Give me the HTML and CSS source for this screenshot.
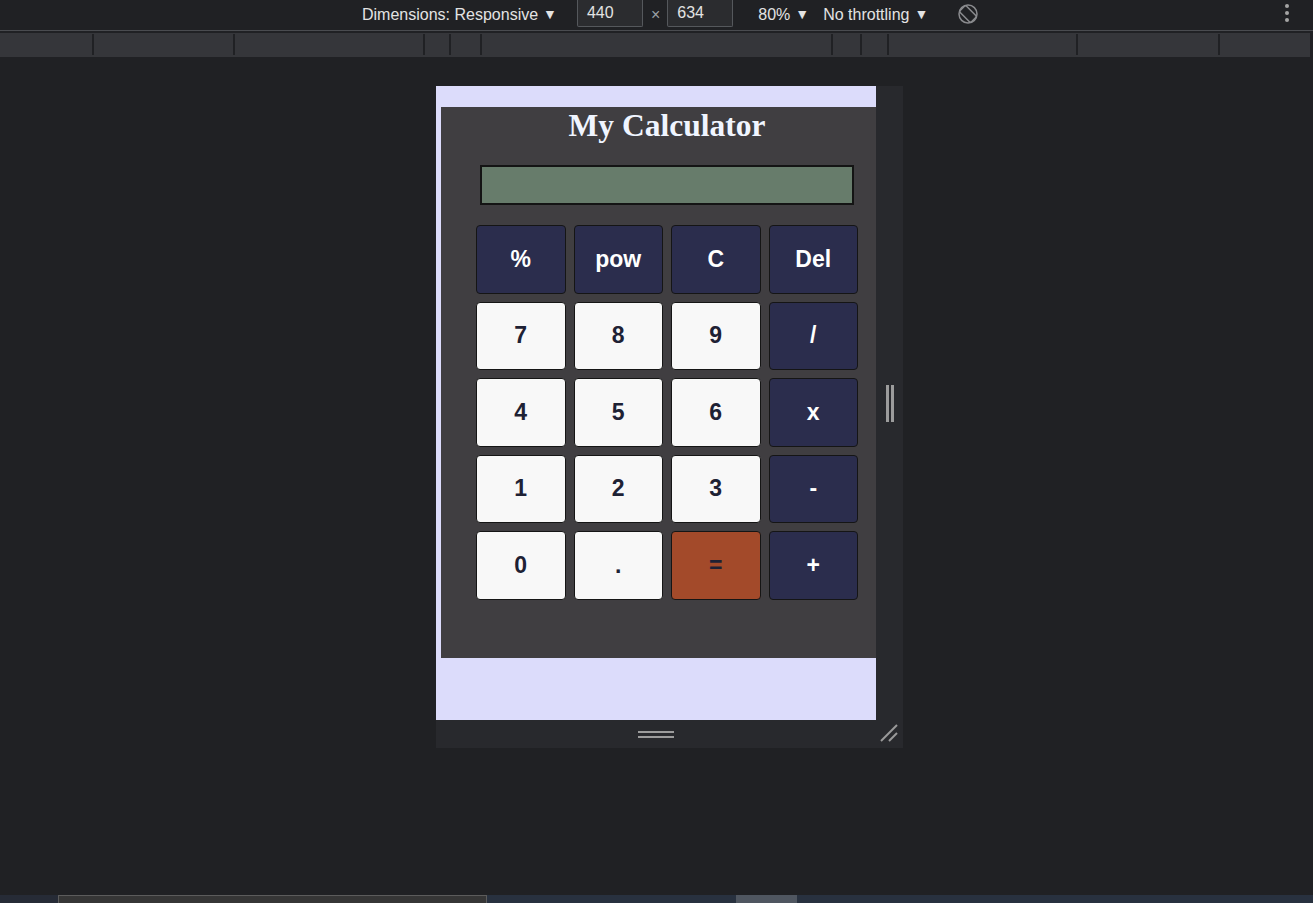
FILE: index.html
```html
<!DOCTYPE html>
<html lang="en">
<head>
<meta charset="utf-8">
<title>My Calculator</title>
<link rel="stylesheet" href="styles.css">
</head>
<body>
<div class="toolbar">
  <span class="tb-label">Dimensions: Responsive</span><span class="caret">▼</span>
  <span class="tb-input first">440</span>
  <span class="times">×</span>
  <span class="tb-input">634</span>
  <span class="tb-label zoomlbl">80%</span><span class="caret">▼</span>
  <span class="tb-label throttle">No throttling</span><span class="caret">▼</span>
  <svg class="rotate" width="22" height="22" viewBox="0 0 22 22">
    <circle cx="11" cy="11" r="9" fill="none" stroke="#8a8b8e" stroke-width="1.5"/>
    <rect x="6.5" y="3" width="9" height="16" rx="1.5" transform="rotate(-45 11 11)" fill="none" stroke="#8a8b8e" stroke-width="1.5"/>
  </svg>
  <span class="kebab"><i></i><i></i><i></i></span>
</div>
<div class="tb-line"></div>
<div class="ruler">
  <span class="seg" style="width:92px"></span><span class="tick"></span>
  <span class="seg" style="width:139px"></span><span class="tick"></span>
  <span class="seg" style="width:188px"></span><span class="tick"></span>
  <span class="seg" style="width:24px"></span><span class="tick"></span>
  <span class="seg" style="width:29px"></span><span class="tick"></span>
  <span class="seg" style="width:349px"></span><span class="tick"></span>
  <span class="seg" style="width:27px"></span><span class="tick"></span>
  <span class="seg" style="width:25px"></span><span class="tick"></span>
  <span class="seg" style="width:187px"></span><span class="tick"></span>
  <span class="seg" style="width:140px"></span><span class="tick"></span>
  <span class="seg" style="width:90px"></span>
</div>
<div class="stage">
  <div class="device">
    <div class="screen">
      <div class="calc">
        <h1 class="title">My Calculator</h1>
        <div class="display"></div>
        <div class="keys">
          <button class="key op">%</button>
          <button class="key op">pow</button>
          <button class="key op">C</button>
          <button class="key op">Del</button>
          <button class="key num">7</button>
          <button class="key num">8</button>
          <button class="key num">9</button>
          <button class="key op">/</button>
          <button class="key num">4</button>
          <button class="key num">5</button>
          <button class="key num">6</button>
          <button class="key op">x</button>
          <button class="key num">1</button>
          <button class="key num">2</button>
          <button class="key num">3</button>
          <button class="key op">-</button>
          <button class="key num">0</button>
          <button class="key num">.</button>
          <button class="key eq">=</button>
          <button class="key op">+</button>
        </div>
      </div>
    </div>
    <div class="rside"><span class="vgrip"></span><span class="vgrip"></span></div>
    <div class="bside">
      <span class="hgrip"><i></i><i></i></span>
      <svg class="corner" width="18" height="18" viewBox="0 0 18 18">
        <line x1="1" y1="17" x2="17" y2="1" stroke="#9a9a9a" stroke-width="2"/>
        <line x1="9" y1="17" x2="17" y2="9" stroke="#9a9a9a" stroke-width="2"/>
      </svg>
    </div>
  </div>
</div>
<div class="strip">
  <span class="s1"></span><span class="s2"></span><span class="s3"></span><span class="s4"></span><span class="s5"></span>
</div>
</body>
</html>
```
FILE: styles.css
```css
* { box-sizing: border-box; }
html, body { margin: 0; padding: 0; }
body {
  width: 1313px;
  height: 903px;
  overflow: hidden;
  background: #202124;
  display: flex;
  flex-direction: column;
  font-family: "Liberation Sans", Arial, sans-serif;
}

/* toolbar */
.toolbar {
  height: 30px;
  flex: none;
  display: flex;
  align-items: center;
  color: #e3e3e3;
  font-size: 16px;
  padding-left: 362px;
}
.tb-label { white-space: nowrap; }
.caret {
  font-size: 14px;
  margin-left: 5px;
  margin-top: -3px;
  color: #e3e3e3;
}
.tb-input {
  width: 66px;
  height: 27px;
  align-self: flex-start;
  background: #2b2c2f;
  border: 1px solid #55585c;
  border-top: none;
  border-radius: 0 0 2px 2px;
  padding: 4px 0 0 9px;
  color: #e3e3e3;
}
.tb-input.first { margin-left: 20px; }
.times { color: #9aa0a6; margin: 0 7px 0 8px; font-size: 16px; }
.zoomlbl { margin-left: 25px; }
.throttle { margin-left: 14px; }
.rotate { margin-left: 29px; margin-bottom: 3px; }
.kebab {
  margin-left: auto;
  margin-right: 24px;
  display: flex;
  flex-direction: column;
  gap: 3px;
  margin-top: -4px;
}
.kebab i {
  display: block;
  width: 4px;
  height: 4px;
  border-radius: 50%;
  background: #a5a5a5;
}
.tb-line {
  height: 1px;
  background: #4a4c50;
  flex: none;
  margin-bottom: 2px;
}

/* ruler */
.ruler {
  height: 24px;
  flex: none;
  display: flex;
  width: 1310px;
  background: #35363a;
}
.seg { display: block; height: 100%; }
.tick {
  display: block;
  width: 2px;
  height: 21px;
  margin-top: 1px;
  background: #202124;
}

/* stage / device */
.stage {
  flex: 1;
  padding: 29px 0 0 436px;
}
.device {
  display: grid;
  grid-template-columns: 440px 27px;
  grid-template-rows: 634px 28px;
  width: 467px;
}
.screen {
  background: #dcdcfb;
  overflow: hidden;
  padding: 21px 0 0 5px;
}
.calc {
  width: 452px;
  height: 551px;
  background: #403e41;
}
.title {
  margin: 0;
  font-family: "Liberation Serif", "Times New Roman", serif;
  font-size: 31.5px;
  font-weight: bold;
  text-align: center;
  color: #f0f5ff;
  line-height: 38px;
}
.display {
  width: 374px;
  height: 40px;
  margin: 20px auto 0;
  background: #677c6b;
  border: 2px solid #141414;
}
.keys {
  width: 382px;
  margin: 20px auto 0;
  display: grid;
  grid-template-columns: repeat(4, 89.5px);
  grid-auto-rows: 68.5px;
  gap: 8px;
}
.key {
  font-family: "Liberation Sans", Arial, sans-serif;
  font-size: 23px;
  font-weight: bold;
  border: 1px solid #151515;
  border-radius: 4px;
  padding: 0;
  margin: 0;
}
.op { background: #2b2d4d; color: #ffffff; }
.num { background: #f8f8f8; color: #1e2134; }
.eq { background: #a34a2a; color: #1e2134; }

.rside {
  background: #28292d;
  display: flex;
  justify-content: center;
  align-items: center;
  gap: 2px;
}
.vgrip {
  display: block;
  width: 3px;
  height: 37px;
  background: #9c9c9c;
}
.bside {
  grid-column: 1 / 3;
  background: #28292d;
  display: flex;
  align-items: center;
  padding-left: 202px;
}
.hgrip {
  display: flex;
  flex-direction: column;
  gap: 3px;
  margin-top: 1px;
}
.hgrip i {
  display: block;
  width: 36px;
  height: 2px;
  background: #9c9c9c;
}
.corner { margin-left: auto; margin-right: 5px; margin-top: -2px; }

/* bottom strip */
.strip {
  height: 8px;
  flex: none;
  display: flex;
}
.strip span { display: block; height: 100%; }
.s1 { width: 58px; background: #262b36; }
.s2 { width: 429px; background: #363636; border-top: 1px solid #5c5c5c; border-left: 1px solid #5c5c5c; border-right: 1px solid #5c5c5c; }
.s3 { width: 249px; background: #28313f; }
.s4 { width: 61px; background: #4f5660; }
.s5 { flex: 1; background: #28313f; }
```
